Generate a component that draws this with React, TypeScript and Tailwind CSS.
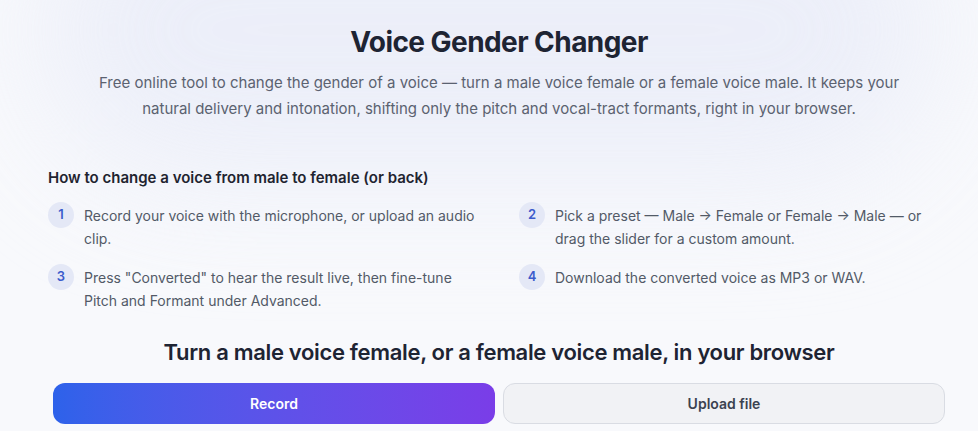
const steps = [
  { n: 1, text: "Record your voice with the microphone, or upload an audio clip." },
  { n: 2, text: "Pick a preset — Male → Female or Female → Male — or drag the slider for a custom amount." },
  { n: 3, text: 'Press "Converted" to hear the result live, then fine-tune Pitch and Formant under Advanced.' },
  { n: 4, text: "Download the converted voice as MP3 or WAV." },
];

export default function App() {
  return (
    <div
      className="relative min-h-screen overflow-hidden bg-[#f8f9fc] pl-[20px] text-[#1f2937]"
      style={{ fontFamily: "Inter, 'Noto Sans', sans-serif" }}
    >
      <div className="pointer-events-none absolute left-1/2 top-[-120px] h-[300px] w-[900px] -translate-x-1/2 rounded-full bg-[#e9ecf8] opacity-80 blur-3xl" />
      <div className="relative">
        <header className="flex flex-col items-center pt-[24px] text-center">
          <h1 className="text-[28px] font-bold leading-[36px] tracking-[-0.02em] text-[#1e2433]">
            Voice Gender Changer
          </h1>
          <p className="mt-[10px] max-w-[820px] text-[15px] leading-[26px] text-[#5b6270]">
            Free online tool to change the gender of a voice — turn a male voice female or a female voice male. It keeps your natural delivery and intonation, shifting only the pitch and vocal-tract formants, right in your browser.
          </p>
        </header>

        <section className="ml-[28px] mr-[20px] mt-[44px]">
          <h2 className="text-[15px] font-semibold leading-[24px] text-[#1f2430]">
            How to change a voice from male to female (or back)
          </h2>
          <ol className="mt-[14px] grid grid-cols-2 gap-x-[32px] gap-y-[16px]">
            {steps.map((s) => (
              <li key={s.n} className="flex items-start gap-[10px] even:pr-[24px]">
                <span className="mt-[-2px] flex size-[26px] shrink-0 items-center justify-center rounded-full bg-[#e4e8f6] text-[13px] font-semibold text-[#3b5bcc]">
                  {s.n}
                </span>
                <p className="text-[14px] leading-[23px] text-[#525a67]">{s.text}</p>
              </li>
            ))}
          </ol>
        </section>

        <section className="mx-[33px] mt-[25px]">
          <h2 className="text-center text-[22px] font-semibold leading-[30px] tracking-[-0.015em] text-[#1e2433]">
            Turn a male voice female, or a female voice male, in your browser
          </h2>
          <div className="mt-[16px] grid grid-cols-2 gap-[8px]">
            <button className="h-[41px] rounded-[12px] bg-gradient-to-r from-[#2d62ea] to-[#7a3de8] text-[14px] font-semibold text-white">
              Record
            </button>
            <button className="h-[41px] rounded-[12px] border border-[#d9dce3] bg-[#f1f2f5] text-[14px] font-semibold text-[#3b4250]">
              Upload file
            </button>
          </div>
        </section>
      </div>
    </div>
  );
}
